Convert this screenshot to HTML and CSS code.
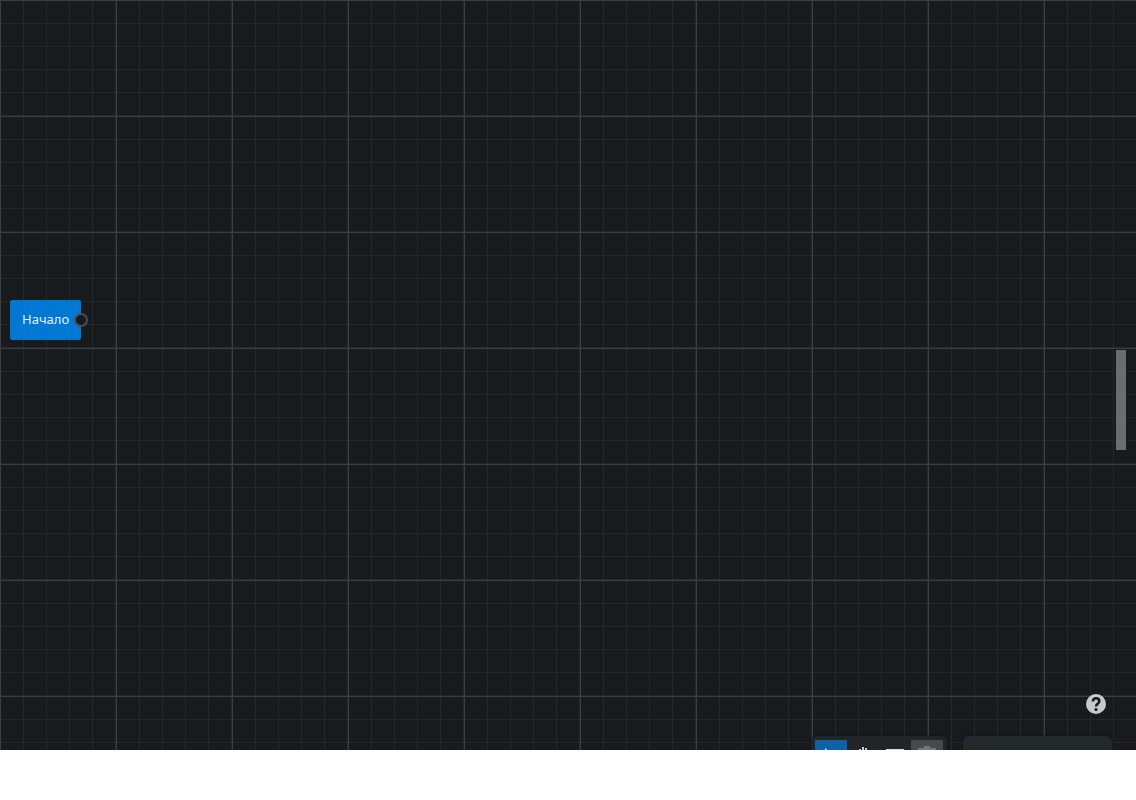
FILE: index.html
```html
<!DOCTYPE html>
<html lang="ru">
<head>
<meta charset="utf-8">
<title>Начало</title>
<link rel="stylesheet" href="styles.css">
</head>
<body>
<main class="canvas">
  <svg class="grid" width="100%" height="100%" aria-hidden="true">
    <defs>
      <pattern id="cells" width="116" height="116" patternUnits="userSpaceOnUse">
        <path class="minor" d="M23.5 0V116M46.5 0V116M69.5 0V116M92.5 0V116M115.5 0V116M0 23.5H116M0 46.5H116M0 69.5H116M0 92.5H116M0 115.5H116"/>
        <path class="major" d="M.5 0V116M0 .5H116"/>
      </pattern>
    </defs>
    <rect width="100%" height="100%" fill="url(#cells)"/>
  </svg>
  <div class="node">Начало<span class="port"></span></div>
  <div class="handle"></div>
  <button class="help" type="button" aria-label="Справка">
    <svg viewBox="0 0 20 20" width="20" height="20"><circle cx="10" cy="10" r="10" fill="#c8cac9"/><path d="M6.900 7.600C6.900 5.500 8.100 4.200 10 4.200s3.300 1.200 3.300 3c0 2.500-3.300 2.500-3.300 5.300" fill="none" stroke="#181b1d" stroke-width="2.600"/><circle cx="10" cy="15.500" r="1.600" fill="#181b1d"/></svg>
  </button>
  <div class="dock">
    <div class="tools">
      <button class="tool active" type="button" aria-label="Выбор"><svg viewBox="0 0 32 32" width="32" height="32"><path d="M10 8v15l4-4 2 5 3-1-2-5h5z" fill="#d8e8f5"/></svg></button>
      <button class="tool" type="button" aria-label="Перемещение"><svg viewBox="0 0 32 32" width="32" height="32"><path d="M13 20V9M16 18V7M19 18V8M22 19V11" fill="none" stroke="#c8cacb" stroke-width="2"/><path d="M9 16l3 2h11v3l-3 4h-6z" fill="#c8cacb"/></svg></button>
      <button class="tool" type="button" aria-label="Блок"><svg viewBox="0 0 32 32" width="32" height="32"><path d="M8 10h16v12H8z" fill="none" stroke="#dcdcdc" stroke-width="2"/></svg></button>
      <button class="tool disabled" type="button" disabled aria-label="Удалить"><svg viewBox="0 0 32 32" width="32" height="32"><path d="M7 8h6V6h6v2h6v3H7zM9 12h14v13H9z" fill="#737678"/></svg></button>
    </div>
    <div class="minimap"></div>
  </div>
</main>
</body>
</html>
```
FILE: styles.css
```css
body { margin: 0; background: #fff; font-family: "Noto Sans", sans-serif; }
.canvas { position: relative; height: calc(100vh - 50px); overflow: hidden; background: #171b1d; }
.grid { display: block; }
.minor { stroke: #24282b; fill: none; }
.major { stroke: #3b3f41; fill: none; }
.node {
  position: absolute; left: 10px; top: 300px;
  display: flex; align-items: center;
  height: 40px; padding: 0 12px 2px; box-sizing: border-box;
  border-radius: 2px; background: #0078d4; color: #e6f3fc;
  font-size: 13px; line-height: 20px;
}
.port {
  position: absolute; right: -7px; top: 13px;
  width: 14px; height: 14px; box-sizing: border-box;
  border: 2px solid #4b4f53; border-radius: 50%; background: #171b1d;
}
.handle { position: absolute; right: 10px; top: 350px; width: 10px; height: 100px; background: #6b6d6c; }
button { border: 0; padding: 0; background: none; }
.help { position: absolute; right: 30px; bottom: 36px; width: 20px; height: 20px; }
svg { display: block; }
.dock { position: absolute; right: 24px; top: calc(100% - 14px); display: flex; gap: 16px; }
.tools { display: flex; padding: 4px; border-radius: 6px; background: #212528; box-shadow: 0 0 3px #101315; }
.tool { width: 32px; height: 32px; }
.active { background: #0d61a5; }
.disabled { background: #46494b; }
.minimap { width: 149px; height: 149px; border-radius: 6px; background: #23282b; box-shadow: 0 0 3px #101315; }
```
